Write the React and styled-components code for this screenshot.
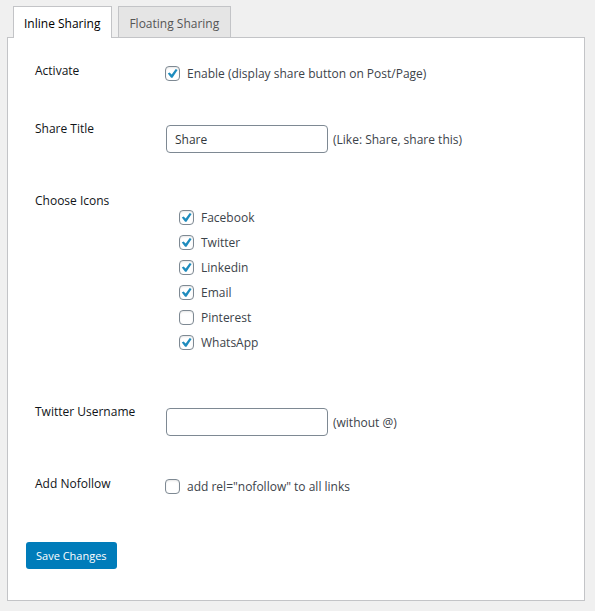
import React, { useState } from "react";
import styled, { createGlobalStyle } from "styled-components";

const GlobalStyle = createGlobalStyle`
  *, *::before, *::after { box-sizing: border-box; }
  body {
    margin: 0;
    background: #f0f0f0;
    color: #3c434a;
    font-family: "Open Sans", "Noto Sans", sans-serif;
    font-size: 12px;
    line-height: 18px;
  }
`;

const Page = styled.main`
  padding: 6px 10px 10px 7px;
`;

const Tabs = styled.nav`
  display: flex;
  gap: 6px;
  padding-left: 6px;
`;

const Tab = styled.a`
  position: relative;
  height: ${(p) => (p.$active ? "32px" : "31px")};
  margin-bottom: ${(p) => (p.$active ? "-1px" : "0")};
  padding: 8px 11px 0 10px;
  border: 1px solid #c3c4c7;
  border-bottom: 0;
  background: ${(p) => (p.$active ? "#fff" : "#e5e5e5")};
  color: ${(p) => (p.$active ? "#000" : "#555")};
  font-weight: 500;
  text-decoration: none;
  white-space: nowrap;
`;

const Panel = styled.form`
  padding: 10px 18px 31px;
  border: 1px solid #c3c4c7;
  background: #fff;
`;

const Row = styled.div`
  display: grid;
  grid-template-columns: 121px 1fr;
  padding: 14px 9px 0;
  min-height: ${(p) => p.$height}px;
`;

const Heading = styled.div`
  color: #101418;
  font-weight: 500;
`;

const Control = styled.div`
  display: flex;
  align-items: center;
  align-self: start;
  gap: 5px;
  padding-top: ${(p) => (p.$field ? "5px" : "1px")};
  padding-left: ${(p) => (p.$field ? "10px" : "9px")};
`;

const Caption = styled.span`
  padding-top: 2px;
`;

const Option = styled.label`
  display: flex;
  align-items: center;
  gap: 7px;
`;

const OptionList = styled.ul`
  display: grid;
  gap: 5px;
  margin: 0;
  padding: 15px 0 0 23px;
  align-content: start;
  list-style: none;
`;

const CheckFrame = styled.span`
  display: grid;
  width: 15px;
  height: 15px;
  & > * { grid-area: 1 / 1; }
`;

const CheckInput = styled.input`
  appearance: none;
  width: 15px;
  height: 15px;
  margin: 0;
  border: 1px solid #7e8993;
  border-radius: 4px;
  background: #fff;
  box-shadow: inset 0 1px 2px rgba(0, 0, 0, 0.1);
`;

const CheckMark = styled.svg`
  width: 15px;
  height: 15px;
  pointer-events: none;
  z-index: 1;
  fill: #1e8cbe;
`;

const TextInput = styled.input`
  width: 162px;
  height: 28px;
  padding: 0 8px;
  border: 1px solid #7e8993;
  border-radius: 4px;
  background: #fff;
  color: #32373c;
  font: inherit;
`;

const SaveButton = styled.button`
  height: 27px;
  padding: 0 10px;
  border: 0;
  border-radius: 3px;
  background: #007cba;
  color: #fff;
  font: inherit;
  font-size: 11px;
`;

function CheckOption({ label, initial }) {
  const [checked, setChecked] = useState(initial);
  return (
    <Option>
      <CheckFrame>
        <CheckInput
          type="checkbox"
          checked={checked}
          onChange={(e) => setChecked(e.target.checked)}
        />
        {checked && (
          <CheckMark viewBox="0 0 15 15" aria-hidden="true">
            <path d="M2.8 7.6 4.6 6.4 6.7 8.6 10.7 3 12.6 4.1 7.5 11.8 6.1 11.8Z" />
          </CheckMark>
        )}
      </CheckFrame>
      <Caption>{label}</Caption>
    </Option>
  );
}

const networks = [
  ["Facebook", true],
  ["Twitter", true],
  ["Linkedin", true],
  ["Email", true],
  ["Pinterest", false],
  ["WhatsApp", true],
];

export default function App() {
  return (
    <Page>
      <GlobalStyle />
      <Tabs>
        <Tab href="#inline" $active aria-current="page">Inline Sharing</Tab>
        <Tab href="#floating">Floating Sharing</Tab>
      </Tabs>
      <Panel onSubmit={(e) => e.preventDefault()}>
        <Row $height={58}>
          <Heading>Activate</Heading>
          <Control>
            <CheckOption label="Enable (display share button on Post/Page)" initial />
          </Control>
        </Row>
        <Row $height={72}>
          <Heading as="label" htmlFor="share-title">Share Title</Heading>
          <Control $field>
            <TextInput id="share-title" type="text" defaultValue="Share" />
            <Caption>(Like: Share, share this)</Caption>
          </Control>
        </Row>
        <Row $height={211} role="group" aria-labelledby="choose-icons">
          <Heading id="choose-icons">Choose Icons</Heading>
          <OptionList>
            {networks.map(([name, on]) => (
              <li key={name}>
                <CheckOption label={name} initial={on} />
              </li>
            ))}
          </OptionList>
        </Row>
        <Row $height={72}>
          <Heading as="label" htmlFor="twitter-username">Twitter Username</Heading>
          <Control $field>
            <TextInput id="twitter-username" type="text" />
            <Caption>(without @)</Caption>
          </Control>
        </Row>
        <Row $height={81}>
          <Heading>Add Nofollow</Heading>
          <Control>
            <CheckOption label={'add rel="nofollow" to all links'} initial={false} />
          </Control>
        </Row>
        <SaveButton type="submit">Save Changes</SaveButton>
      </Panel>
    </Page>
  );
}
